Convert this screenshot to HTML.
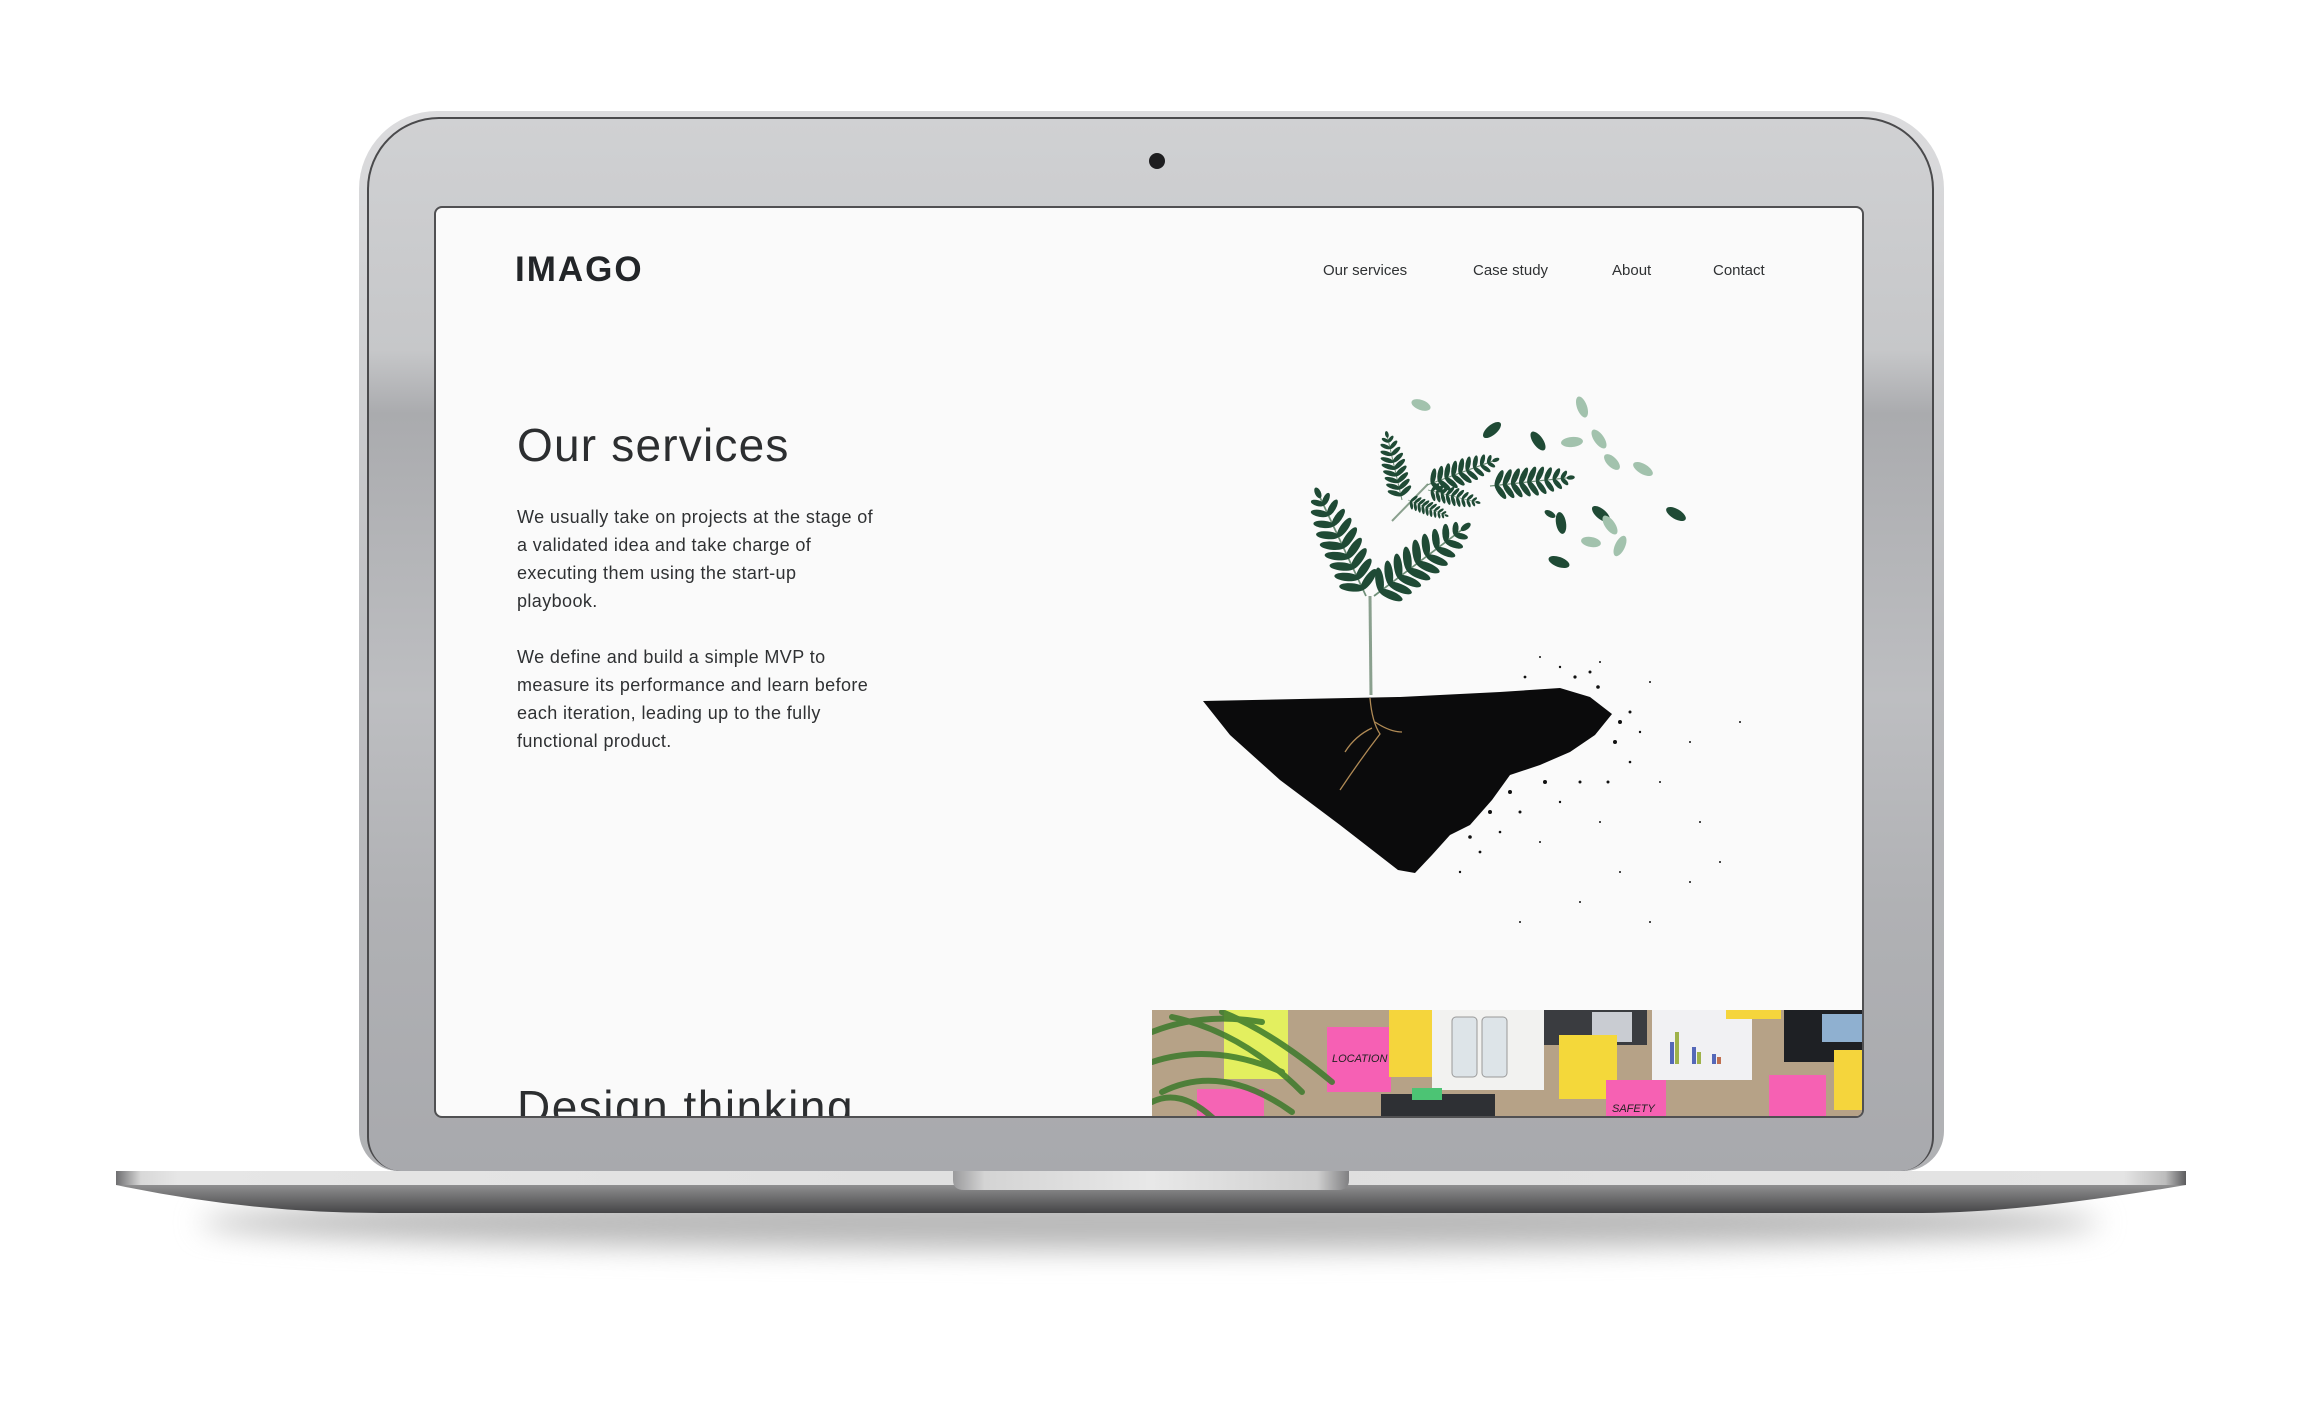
<!DOCTYPE html>
<html><head><meta charset="utf-8">
<style>
html,body{margin:0;padding:0;background:#fff;}
body{width:2303px;height:1420px;position:relative;overflow:hidden;font-family:"Liberation Sans",sans-serif;}
.abs{position:absolute;}
#body{left:359px;top:111px;width:1585px;height:1060px;border-radius:78px 78px 40px 40px;
 background:linear-gradient(#dcdcde,#cfd0d2 20%,#bdbec1 50%,#b6b7ba 70%,#b0b1b4);}
#inner{left:367px;top:117px;width:1567px;height:1054px;border-radius:72px 72px 34px 34px;box-sizing:border-box;
 border:2px solid #4a4a4c;border-bottom:none;
 background:linear-gradient(#d0d1d3 0%,#c6c7c9 22%,#aaabae 28%,#b3b4b7 40%,#bdbec1 55%,#b0b1b4 75%,#a8a9ad 100%);}
#screen{left:434px;top:206px;width:1430px;height:912px;background:#fafafa;border:2px solid #505052;border-radius:8px;overflow:hidden;box-sizing:border-box;}
#screen .t{position:absolute;color:#2f3133;white-space:nowrap;}
.nav{font-size:15px;top:54px;color:#4a4a4a;}
.p{font-size:18px;letter-spacing:0.4px;line-height:28px;color:#44464a;}
</style></head><body>
<div class="abs" style="left:200px;top:1195px;width:1900px;height:55px;border-radius:50%;background:#b9b9b9;filter:blur(14px);"></div>
<div id="body" class="abs"></div>
<div id="inner" class="abs"></div>
<div class="abs" style="left:1149px;top:153px;width:16px;height:16px;border-radius:50%;background:#1e1e20;"></div>

<div id="screen" class="abs">
 <div class="t" style="left:79px;top:44px;font-size:35px;font-weight:bold;letter-spacing:2px;color:#222528;line-height:35px;">IMAGO</div>
 <div class="t nav" style="left:887px;">Our services</div>
 <div class="t nav" style="left:1037px;">Case study</div>
 <div class="t nav" style="left:1176px;">About</div>
 <div class="t nav" style="left:1277px;">Contact</div>
 <div class="t" style="left:81px;top:214px;font-size:46px;letter-spacing:1.2px;line-height:46px;color:#2c2e30;">Our services</div>
 <div class="t p" style="left:81px;top:295px;">We usually take on projects at the stage of<br>a validated idea and take charge of<br>executing them using the start-up<br>playbook.</div>
 <div class="t p" style="left:81px;top:435px;">We define and build a simple MVP to<br>measure its performance and learn before<br>each iteration, leading up to the fully<br>functional product.</div>
 <div class="t" style="left:81px;top:876px;font-size:46px;letter-spacing:1.5px;line-height:46px;color:#2c2e30;">Design thinking</div>
 <svg class="abs" style="left:716px;top:802px;" width="720" height="112" viewBox="1150 1008 720 112">
  <rect x="1150" y="1008" width="720" height="112" fill="#b6a287"/>
  <rect x="1222" y="1008" width="64" height="69" fill="#e3ef5f"/>
  <rect x="1195" y="1087" width="67" height="35" fill="#f564b4"/>
  <rect x="1325" y="1025" width="64" height="65" fill="#f660b4"/>
  <text x="1330" y="1060" font-size="11" fill="#222" font-family="Liberation Sans" font-style="italic">LOCATION</text>
  <rect x="1387" y="1008" width="63" height="67" fill="#f5d53c"/>
  <rect x="1430" y="1008" width="112" height="80" fill="#f2f2f0"/>
  <rect x="1450" y="1015" width="25" height="60" rx="4" fill="#dde4e8" stroke="#999" stroke-width="1"/>
  <rect x="1480" y="1015" width="25" height="60" rx="4" fill="#dde4e8" stroke="#999" stroke-width="1"/>
  <rect x="1542" y="1008" width="103" height="35" fill="#3a3c40"/>
  <rect x="1590" y="1010" width="40" height="30" fill="#c9ccd2"/>
  <rect x="1557" y="1033" width="58" height="64" fill="#f4d83a"/>
  <rect x="1604" y="1078" width="60" height="42" fill="#f661b3"/>
  <text x="1610" y="1110" font-size="11" fill="#222" font-family="Liberation Sans" font-style="italic">SAFETY</text>
  <rect x="1650" y="1008" width="100" height="70" fill="#f1f1f3"/>
  <rect x="1668" y="1040" width="4" height="22" fill="#5568b8"/><rect x="1673" y="1030" width="4" height="32" fill="#9fb24a"/>
  <rect x="1690" y="1045" width="4" height="17" fill="#5568b8"/><rect x="1695" y="1050" width="4" height="12" fill="#9fb24a"/>
  <rect x="1710" y="1052" width="4" height="10" fill="#5568b8"/><rect x="1715" y="1055" width="4" height="7" fill="#c07050"/>
  <rect x="1724" y="1008" width="55" height="9" fill="#f5d53c"/>
  <rect x="1782" y="1008" width="82" height="52" fill="#1e2024"/>
  <rect x="1820" y="1012" width="40" height="28" fill="#8fb0d0"/>
  <rect x="1767" y="1073" width="57" height="47" fill="#f661b3"/>
  <rect x="1832" y="1048" width="32" height="60" fill="#f5d53c"/>
  <rect x="1379" y="1092" width="114" height="28" fill="#2e3034"/>
  <rect x="1410" y="1086" width="30" height="12" fill="#4cc474"/>
  <g fill="none" stroke="#3c7a2c" stroke-width="6" stroke-linecap="round" opacity="0.85">
   <path d="M1150 1030 Q1200 1010 1260 1020"/>
   <path d="M1150 1060 Q1210 1040 1280 1070"/>
   <path d="M1160 1090 Q1220 1060 1290 1110"/>
   <path d="M1170 1015 Q1240 1030 1300 1090"/>
   <path d="M1150 1100 Q1180 1085 1215 1120"/>
   <path d="M1220 1010 Q1270 1030 1330 1080"/>
  </g>
 </svg>
</div>

<svg class="abs" style="left:0;top:0" width="2303" height="1420">
 <defs>
  <g id="fr">
   <line x1="0" y1="0" x2="100" y2="0" stroke="#6f8f78" stroke-width="1.5"/>
   <g fill="#1f4a35">
    <ellipse cx="12" cy="-8" rx="11" ry="3.6" transform="rotate(-60 12 -8)"/><ellipse cx="12" cy="8" rx="11" ry="3.6" transform="rotate(60 12 8)"/>
    <ellipse cx="22" cy="-8" rx="11" ry="3.6" transform="rotate(-60 22 -8)"/><ellipse cx="22" cy="8" rx="11" ry="3.6" transform="rotate(60 22 8)"/>
    <ellipse cx="32" cy="-8" rx="11" ry="3.6" transform="rotate(-60 32 -8)"/><ellipse cx="32" cy="8" rx="11" ry="3.6" transform="rotate(60 32 8)"/>
    <ellipse cx="42" cy="-8" rx="11" ry="3.6" transform="rotate(-60 42 -8)"/><ellipse cx="42" cy="8" rx="11" ry="3.6" transform="rotate(60 42 8)"/>
    <ellipse cx="52" cy="-8" rx="11" ry="3.6" transform="rotate(-60 52 -8)"/><ellipse cx="52" cy="8" rx="11" ry="3.6" transform="rotate(60 52 8)"/>
    <ellipse cx="62" cy="-8" rx="10" ry="3.4" transform="rotate(-60 62 -8)"/><ellipse cx="62" cy="8" rx="10" ry="3.4" transform="rotate(60 62 8)"/>
    <ellipse cx="72" cy="-7" rx="9" ry="3.2" transform="rotate(-60 72 -7)"/><ellipse cx="72" cy="7" rx="9" ry="3.2" transform="rotate(60 72 7)"/>
    <ellipse cx="82" cy="-6" rx="8" ry="3" transform="rotate(-55 82 -6)"/><ellipse cx="82" cy="6" rx="8" ry="3" transform="rotate(55 82 6)"/>
    <ellipse cx="91" cy="-4" rx="6" ry="2.6" transform="rotate(-50 91 -4)"/><ellipse cx="91" cy="4" rx="6" ry="2.6" transform="rotate(50 91 4)"/>
    <ellipse cx="99" cy="0" rx="5" ry="2.6"/>
   </g>
  </g>
 </defs>
 <line x1="1370" y1="596" x2="1371" y2="695" stroke="#8aa08e" stroke-width="3"/>
 <line x1="1392" y1="521" x2="1428" y2="484" stroke="#8aa08e" stroke-width="2"/>
 <use href="#fr" transform="translate(1366,596) rotate(-115) scale(1.15)"/>
 <use href="#fr" transform="translate(1374,596) rotate(-37) scale(1.16)"/>
 <use href="#fr" transform="translate(1402,500) rotate(-103) scale(0.68)"/>
 <use href="#fr" transform="translate(1427,485) rotate(-20) scale(0.74)"/>
 <use href="#fr" transform="translate(1408,500) rotate(22) scale(0.42)"/>
 <use href="#fr" transform="translate(1428,490) rotate(14) scale(0.52)"/>
 <use href="#fr" transform="translate(1490,486) rotate(-6) scale(0.82)"/>
 <g fill="#1f4a35">
  <ellipse cx="1492" cy="430" rx="11" ry="5" transform="rotate(-40 1492 430)"/>
  <ellipse cx="1538" cy="441" rx="11" ry="5" transform="rotate(55 1538 441)"/>
  <ellipse cx="1561" cy="523" rx="11" ry="5" transform="rotate(80 1561 523)"/>
  <ellipse cx="1676" cy="514" rx="11" ry="5" transform="rotate(30 1676 514)"/>
  <ellipse cx="1559" cy="562" rx="11" ry="5" transform="rotate(20 1559 562)"/>
  <ellipse cx="1601" cy="514" rx="11" ry="5" transform="rotate(40 1601 514)"/>
  <ellipse cx="1550" cy="514" rx="6" ry="3" transform="rotate(30 1550 514)"/>
 </g>
 <g fill="#a2c2ad">
  <ellipse cx="1421" cy="405" rx="10" ry="5" transform="rotate(20 1421 405)"/>
  <ellipse cx="1582" cy="407" rx="11" ry="5" transform="rotate(70 1582 407)"/>
  <ellipse cx="1572" cy="442" rx="11" ry="5" transform="rotate(-5 1572 442)"/>
  <ellipse cx="1599" cy="439" rx="11" ry="5" transform="rotate(55 1599 439)"/>
  <ellipse cx="1612" cy="462" rx="10" ry="5" transform="rotate(45 1612 462)"/>
  <ellipse cx="1643" cy="469" rx="11" ry="5" transform="rotate(30 1643 469)"/>
  <ellipse cx="1610" cy="525" rx="11" ry="5" transform="rotate(55 1610 525)"/>
  <ellipse cx="1591" cy="542" rx="10" ry="5" transform="rotate(10 1591 542)"/>
  <ellipse cx="1620" cy="546" rx="11" ry="5" transform="rotate(-65 1620 546)"/>
 </g>
 <path d="M1203 701 L1300 699 L1400 697 L1500 692 L1560 688 L1590 697 L1612 714 L1595 735 L1570 752 L1540 765 L1510 775 L1492 800 L1470 825 L1450 835 L1432 855 L1415 873 L1398 870 L1340 825 L1280 780 L1230 735 Z" fill="#0b0b0c"/>
 <g fill="none" stroke="#b08a55" stroke-width="1.3">
  <path d="M1370 698 Q1372 722 1380 734 Q1360 760 1340 790"/>
  <path d="M1375 722 Q1390 732 1402 732"/>
  <path d="M1372 728 Q1355 736 1345 752"/>
 </g>
 <g fill="#111" transform="translate(0,22)">
  <circle cx="1620" cy="700" r="2"/><circle cx="1630" cy="690" r="1.5"/><circle cx="1615" cy="720" r="2"/><circle cx="1640" cy="710" r="1.2"/>
  <circle cx="1590" cy="650" r="1.5"/><circle cx="1560" cy="645" r="1.2"/><circle cx="1600" cy="640" r="1"/><circle cx="1650" cy="660" r="1"/>
  <circle cx="1525" cy="655" r="1.4"/><circle cx="1540" cy="635" r="1"/><circle cx="1580" cy="760" r="1.5"/><circle cx="1560" cy="780" r="1.2"/>
  <circle cx="1520" cy="790" r="1.5"/><circle cx="1500" cy="810" r="1.3"/><circle cx="1480" cy="830" r="1.4"/><circle cx="1460" cy="850" r="1.2"/>
  <circle cx="1540" cy="820" r="1"/><circle cx="1600" cy="800" r="1"/><circle cx="1660" cy="760" r="1"/><circle cx="1690" cy="720" r="1"/>
  <circle cx="1700" cy="800" r="1"/><circle cx="1740" cy="700" r="1"/><circle cx="1620" cy="850" r="1"/><circle cx="1580" cy="880" r="1"/>
  <circle cx="1650" cy="900" r="1"/><circle cx="1520" cy="900" r="1"/><circle cx="1690" cy="860" r="1"/><circle cx="1720" cy="840" r="1"/>
  <circle cx="1608" cy="760" r="1.5"/><circle cx="1630" cy="740" r="1.3"/><circle cx="1545" cy="760" r="2"/><circle cx="1510" cy="770" r="2"/>
  <circle cx="1490" cy="790" r="2"/><circle cx="1470" cy="815" r="1.8"/><circle cx="1598" cy="665" r="1.8"/><circle cx="1575" cy="655" r="1.6"/>
 </g>
</svg>

<svg class="abs" style="left:0;top:0" width="2303" height="1420">
 <defs>
  <linearGradient id="strip" x1="0" x2="1" y1="0" y2="0">
   <stop offset="0" stop-color="#6e6e70"/><stop offset="0.012" stop-color="#d8d8d8"/><stop offset="0.03" stop-color="#e6e6e6"/>
   <stop offset="0.5" stop-color="#dedede"/><stop offset="0.97" stop-color="#e4e4e4"/><stop offset="0.99" stop-color="#bdbdbd"/><stop offset="1" stop-color="#5c5c5e"/>
  </linearGradient>
  <linearGradient id="low" x1="0" x2="0" y1="0" y2="1">
   <stop offset="0" stop-color="#8f8f90"/><stop offset="1" stop-color="#454547"/>
  </linearGradient>
  <linearGradient id="notch" x1="0" x2="1" y1="0" y2="0">
   <stop offset="0" stop-color="#9a9a9c"/><stop offset="0.08" stop-color="#d4d4d4"/><stop offset="0.5" stop-color="#e8e8e8"/><stop offset="0.92" stop-color="#cfcfcf"/><stop offset="1" stop-color="#808082"/>
  </linearGradient>
 </defs>
 <path d="M116 1185 L2186 1185 Q2020 1213 1922 1213 L380 1213 Q250 1213 116 1185 Z" fill="url(#low)"/>
 <rect x="116" y="1171" width="2070" height="14" fill="url(#strip)"/>
 <path d="M953 1171 L1349 1171 L1349 1180 Q1349 1190 1338 1190 L964 1190 Q953 1190 953 1180 Z" fill="url(#notch)"/>
</svg>
</body></html>
